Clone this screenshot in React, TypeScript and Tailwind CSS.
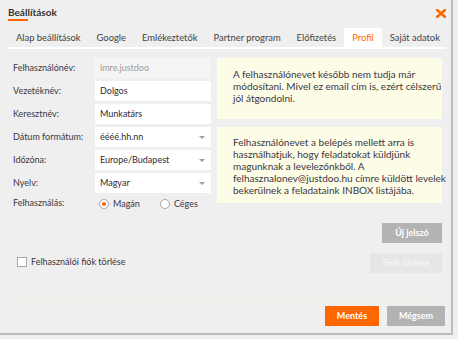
import React from "react";

const tabs = [
  "Alap beállítások",
  "Google",
  "Emlékeztetők",
  "Partner program",
  "Előfizetés",
  "Profil",
  "Saját adatok",
];

const font = { fontFamily: "Lato, 'Open Sans', sans-serif" };

function Row({ label, children }: { label: string; children: React.ReactNode }) {
  return (
    <div className="flex items-center h-[20px] mb-[3px]">
      <div className="w-[82px] text-[9px] leading-[14px] text-[#3b3644] whitespace-nowrap">{label}</div>
      {children}
    </div>
  );
}

function TextInput({ value, disabled }: { value: string; disabled?: boolean }) {
  return (
    <div
      className={`w-[116px] h-[20px] pl-[5px] flex items-center text-[9px] ${
        disabled ? "bg-[#f5f5f5] text-[#9a9a9a]" : "bg-white text-[#2f2a36]"
      }`}
    >
      {value}
    </div>
  );
}

function Select({ value }: { value: string }) {
  return (
    <div className="w-[116px] h-[20px] pl-[5px] pr-[6px] flex items-center justify-between bg-white text-[9px] text-[#2f2a36]">
      <span>{value}</span>
      <span className="w-0 h-0 border-l-[3px] border-r-[3px] border-t-[3px] border-l-transparent border-r-transparent border-t-[#a0a0a0]" />
    </div>
  );
}

function Radio({ checked, label }: { checked?: boolean; label: string }) {
  return (
    <div className="flex items-center gap-[4px]">
      <span className="w-[10px] h-[10px] rounded-full border border-[#a8a8a8] bg-white flex items-center justify-center">
        {checked && <span className="w-[4px] h-[4px] rounded-full bg-[#ff6600]" />}
      </span>
      <span className="text-[9px] text-[#3b3644]">{label}</span>
    </div>
  );
}

export default function App() {
  return (
    <div className="w-[458px] h-[339px] bg-[#efefef]" style={font}>
      <div className="w-[453px] h-[335px] bg-[#efefef] border-r-2 border-b-2 border-[#bcbcbc] pl-2 pr-[5px] pt-[6px]">
        {/* header */}
        <div className="flex justify-between items-start">
          <div>
            <div className="text-[10px] leading-[13px] font-bold text-[#333]">Beállítások</div>
            <div className="w-[20px] h-[2px] bg-[#ff6600]" />
          </div>
          <svg width="10" height="9" viewBox="0 0 10 9" className="mt-[3px]">
            <path d="M1 1 L9 8 M9 1 L1 8" stroke="#ff6600" strokeWidth="2.6" strokeLinecap="square" />
          </svg>
        </div>

        {/* tabs */}
        <div className="flex mt-[7px] border-b-2 border-white">
          {tabs.map((t) => (
            <div
              key={t}
              className={`px-2 h-[19px] leading-[19px] text-[9.4px] whitespace-nowrap ${
                t === "Profil" ? "bg-white text-[#ff6600]" : "text-[#444]"
              }`}
            >
              {t}
            </div>
          ))}
        </div>

        {/* body */}
        <div className="h-[249px] flex pl-[5px] pt-[9px]">
          <div className="w-[198px]">
            <Row label="Felhasználónév:">
              <TextInput value="imre.justdoo" disabled />
            </Row>
            <Row label="Vezetéknév:">
              <TextInput value="Dolgos" />
            </Row>
            <Row label="Keresztnév:">
              <TextInput value="Munkatárs" />
            </Row>
            <Row label="Dátum formátum:">
              <Select value="éééé.hh.nn" />
            </Row>
            <Row label="Időzóna:">
              <Select value="Europe/Budapest" />
            </Row>
            <Row label="Nyelv:">
              <Select value="Magyar" />
            </Row>
            <div className="flex items-center h-[14px] mt-[4px]">
              <div className="w-[82px] text-[9px] leading-[14px] text-[#3b3644] -mt-[3px]">Felhasználás:</div>
              <div className="flex items-center gap-[20px] pl-[4px]">
                <Radio checked label="Magán" />
                <Radio label="Céges" />
              </div>
            </div>
            <label className="flex items-center gap-[4px] ml-[4px] mt-[44px]">
              <span className="w-[10px] h-[10px] border border-[#a8a8a8] bg-white" />
              <span className="text-[9px] text-[#3b3644] whitespace-nowrap">Felhasználói fiók törlése</span>
            </label>
          </div>

          <div className="ml-[6px] w-[225px] flex flex-col">
            <div className="h-[61px] bg-[#fdfde7] pl-4 pr-[6px] pt-[10px] text-[10px] leading-[12px] text-[#3b3644] whitespace-nowrap">
              A felhasználónevet később nem tudja már
              <br />
              módosítani. Mivel ez email cím is, ezért célszerű
              <br />
              jól átgondolni.
            </div>
            <div className="h-[76px] mt-[8px] bg-[#fdfde7] pl-4 pr-[6px] pt-[9px] text-[10px] leading-[12px] text-[#3b3644] whitespace-nowrap">
              Felhasználónevet a belépés mellett arra is
              <br />
              használhatjuk, hogy feladatokat küldjünk
              <br />
              magunknak a levelezőnkből. A
              <br />
              felhasznalonev@justdoo.hu címre küldött levelek
              <br />
              bekerülnek a feladataink INBOX listájába.
            </div>
            <div className="flex flex-col items-end">
              <button className="mt-[20px] w-[60px] h-[20px] bg-[#b3b3b3] text-white text-[9px] font-bold">
                Új jelszó
              </button>
              <button className="mt-[10px] w-[72px] h-[20px] bg-[#e6e6e6] text-[#f4f4f4] text-[9px] font-bold">
                Fiók törlése
              </button>
            </div>
          </div>
        </div>

        {/* footer */}
        <div className="border-t border-[#f3eedb] pt-[7px] flex justify-end gap-2 pr-[1px]">
          <button className="w-[54px] h-[20px] bg-[#ff6600] text-white text-[9px] font-bold">Mentés</button>
          <button className="w-[58px] h-[20px] bg-[#b3b3b3] text-white text-[9px] font-bold">Mégsem</button>
        </div>
      </div>
    </div>
  );
}
